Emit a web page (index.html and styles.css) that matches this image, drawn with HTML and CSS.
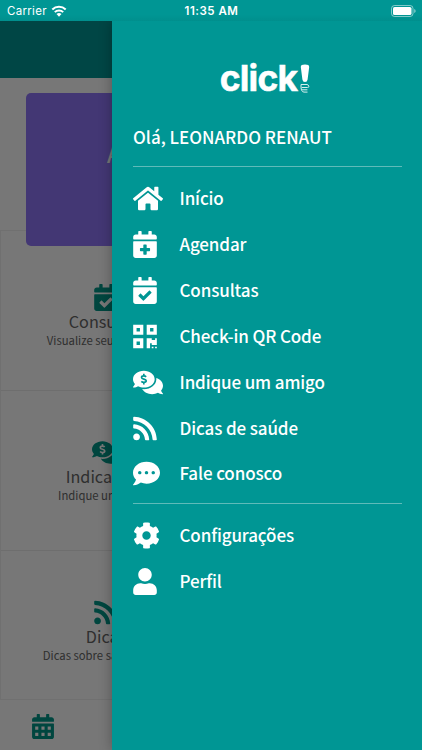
FILE: index.html
```html
<!DOCTYPE html>
<html lang="pt-BR">
<head>
  <meta charset="UTF-8">
  <meta name="viewport" content="width=device-width, initial-scale=1">
  <title>Click - Menu</title>
  <link rel="stylesheet" href="styles.css">
</head>
<body>

  <svg class="sprite" width="0" height="0">
    <symbol id="home" viewBox="0 0 576 512"><path d="M280.37 148.26L96 300.11V464a16 16 0 0 0 16 16l112.06-.29a16 16 0 0 0 15.92-16V368a16 16 0 0 1 16-16h64a16 16 0 0 1 16 16v95.64a16 16 0 0 0 16 16.05L464 480a16 16 0 0 0 16-16V300L295.67 148.26a12.19 12.19 0 0 0-15.3 0zM571.6 251.47L488 182.56V44.05a12 12 0 0 0-12-12h-56a12 12 0 0 0-12 12v72.61L318.47 43a48 48 0 0 0-61 0L4.34 251.47a12 12 0 0 0-1.6 16.9l25.5 31A12 12 0 0 0 45.15 301l235.22-193.74a12.19 12.19 0 0 1 15.3 0L530.9 301a12 12 0 0 0 16.9-1.6l25.5-31a12 12 0 0 0-1.7-16.93z"/></symbol>
    <symbol id="calendar-plus" viewBox="0 0 448 512"><path fill-rule="evenodd" d="M436 160H12c-6.627 0-12-5.373-12-12v-36c0-26.51 21.49-48 48-48h48V12c0-6.627 5.373-12 12-12h40c6.627 0 12 5.373 12 12v52h128V12c0-6.627 5.373-12 12-12h40c6.627 0 12 5.373 12 12v52h48c26.51 0 48 21.49 48 48v36c0 6.627-5.373 12-12 12zM12 192h424c6.627 0 12 5.373 12 12v260c0 26.51-21.49 48-48 48H48c-26.51 0-48-21.49-48-48V204c0-6.627 5.373-12 12-12zM204 256q-12 0-12 12v52h-52q-12 0-12 12v40q0 12 12 12h52v52q0 12 12 12h40q12 0 12-12v-52h52q12 0 12-12v-40q0-12-12-12h-52v-52q0-12-12-12z"/></symbol>
    <symbol id="calendar-check" viewBox="0 0 448 512"><path d="M436 160H12c-6.627 0-12-5.373-12-12v-36c0-26.51 21.49-48 48-48h48V12c0-6.627 5.373-12 12-12h40c6.627 0 12 5.373 12 12v52h128V12c0-6.627 5.373-12 12-12h40c6.627 0 12 5.373 12 12v52h48c26.51 0 48 21.49 48 48v36c0 6.627-5.373 12-12 12zM12 192h424c6.627 0 12 5.373 12 12v260c0 26.51-21.49 48-48 48H48c-26.51 0-48-21.49-48-48V204c0-6.627 5.373-12 12-12zm333.296 95.947l-28.169-28.398c-4.667-4.705-12.265-4.736-16.97-.068L194.12 364.665l-45.98-46.352c-4.667-4.705-12.265-4.736-16.97-.068l-28.397 28.17c-4.705 4.667-4.736 12.265-.068 16.97l82.601 83.269c4.667 4.705 12.265 4.736 16.97.068l142.953-141.805c4.705-4.667 4.736-12.265.068-16.97z"/></symbol>
    <symbol id="calendar" viewBox="0 0 448 512"><path fill-rule="evenodd" d="M436 160H12c-6.627 0-12-5.373-12-12v-36c0-26.51 21.49-48 48-48h48V12c0-6.627 5.373-12 12-12h40c6.627 0 12 5.373 12 12v52h128V12c0-6.627 5.373-12 12-12h40c6.627 0 12 5.373 12 12v52h48c26.51 0 48 21.49 48 48v36c0 6.627-5.373 12-12 12zM12 192h424c6.627 0 12 5.373 12 12v260c0 26.51-21.49 48-48 48H48c-26.51 0-48-21.49-48-48V204c0-6.627 5.373-12 12-12zM64 256h64v64H64zM192 256h64v64h-64zM320 256h64v64h-64zM64 384h64v64H64zM192 384h64v64h-64zM320 384h64v64h-64z"/></symbol>
    <symbol id="qrcode" viewBox="0 0 448 512"><path d="M0 224h192V32H0v192zM64 96h64v64H64V96zm192-64v192h192V32H256zm128 128h-64V96h64v64zM0 480h192V288H0v192zm64-128h64v64H64v-64zm352-64h32v128h-96v-32h-32v96h-64V288h96v32h64v-32zm0 160h32v32h-32v-32zm-64 0h32v32h-32v-32z"/></symbol>
    <symbol id="comments" viewBox="0 0 576 512"><path d="M416 192c0-88.4-93.1-160-208-160S0 103.6 0 192c0 34.3 14.1 65.9 38 92-13.4 30.2-35.5 54.2-35.8 54.5-2.2 2.3-2.8 5.7-1.5 8.7S4.8 352 8 352c36.6 0 66.9-12.3 88.7-25 32.2 15.7 70.3 25 111.3 25 114.9 0 208-71.6 208-160zm122 220c23.9-26 38-57.7 38-92 0-66.9-53.5-124.2-129.3-148.1.9 6.6 1.3 13.3 1.3 20.1 0 105.9-107.7 192-240 192-10.8 0-21.3-.8-31.7-1.9C207.8 439.6 281.8 480 368 480c41 0 79.1-9.2 111.3-25 21.8 12.7 52.1 25 88.7 25 3.2 0 6.1-1.9 7.3-4.8 1.3-2.9.7-6.3-1.5-8.7-.3-.3-22.4-24.2-35.8-54.5z"/><path class="coin" d="M208 88v40m0 128v40M252 148c-12-15-28-18-44-18-28 0-44 12-44 30 0 42 90 20 90 64 0 20-18 31-46 31-20 0-36-7-48-19"/></symbol>
    <symbol id="rss" viewBox="0 0 448 512"><path d="M128.081 415.959c0 35.369-28.672 64.041-64.041 64.041S0 451.328 0 415.959s28.672-64.041 64.041-64.041 64.04 28.673 64.04 64.041zm175.66 47.25c-8.354-154.6-132.185-278.587-286.95-286.95C7.656 175.765 0 183.105 0 192.253v48.069c0 8.415 6.49 15.472 14.887 16.018 111.832 7.284 201.473 96.702 208.772 208.772.547 8.397 7.604 14.887 16.018 14.887h48.069c9.149.001 16.489-7.655 15.995-16.79zm144.249.288C439.596 229.677 251.465 40.445 16.503 32.01 7.473 31.686 0 38.981 0 48.016v48.068c0 8.625 6.835 15.645 15.453 15.999 191.179 7.839 344.627 161.316 352.465 352.465.353 8.618 7.373 15.453 15.999 15.453h48.068c9.034-.001 16.329-7.474 16.005-16.504z"/></symbol>
    <symbol id="comment" viewBox="0 0 512 512"><path d="M256 32C114.6 32 0 125.1 0 240c0 49.6 21.4 95 57 130.7C44.5 421.1 2.7 466 2.2 466.5c-2.2 2.3-2.8 5.7-1.5 8.7S4.8 480 8 480c66.3 0 116-31.8 140.6-51.4 32.7 12.3 69 19.4 107.4 19.4 141.4 0 256-93.1 256-208S397.4 32 256 32zM128 272c-17.7 0-32-14.3-32-32s14.3-32 32-32 32 14.3 32 32-14.3 32-32 32zm128 0c-17.7 0-32-14.3-32-32s14.3-32 32-32 32 14.3 32 32-14.3 32-32 32zm128 0c-17.7 0-32-14.3-32-32s14.3-32 32-32 32 14.3 32 32-14.3 32-32 32z"/></symbol>
    <symbol id="cog" viewBox="0 0 512 512"><path d="M487.4 315.7l-42.6-24.6c4.3-23.2 4.3-47 0-70.2l42.6-24.6c4.9-2.8 7.1-8.6 5.5-14-11.1-35.6-30-67.8-54.7-94.6-3.8-4.1-10-5.1-14.8-2.3L380.8 110c-17.9-15.4-38.5-27.3-60.8-35.1V25.8c0-5.6-3.9-10.5-9.4-11.7-36.7-8.2-74.3-7.8-109.2 0-5.5 1.2-9.4 6.1-9.4 11.7V75c-22.2 7.9-42.8 19.8-60.8 35.1L88.7 85.5c-4.9-2.8-11-1.9-14.8 2.3-24.7 26.7-43.6 58.9-54.7 94.6-1.7 5.4.6 11.2 5.5 14L67.3 221c-4.3 23.2-4.3 47 0 70.2l-42.6 24.6c-4.9 2.8-7.1 8.6-5.5 14 11.1 35.6 30 67.8 54.7 94.6 3.8 4.1 10 5.1 14.8 2.3l42.6-24.6c17.9 15.4 38.5 27.3 60.8 35.1v49.2c0 5.6 3.9 10.5 9.4 11.7 36.7 8.2 74.3 7.8 109.2 0 5.5-1.2 9.4-6.1 9.4-11.7v-49.2c22.2-7.9 42.8-19.8 60.8-35.1l42.6 24.6c4.9 2.8 11 1.9 14.8-2.3 24.7-26.7 43.6-58.9 54.7-94.6 1.5-5.5-.7-11.3-5.6-14.1zM256 336c-44.1 0-80-35.9-80-80s35.9-80 80-80 80 35.9 80 80-35.9 80-80 80z"/></symbol>
    <symbol id="user" viewBox="0 0 448 512"><path d="M224 256c70.7 0 128-57.3 128-128S294.7 0 224 0 96 57.3 96 128s57.3 128 128 128zm89.6 32h-16.7c-22.2 10.2-46.9 16-72.9 16s-50.6-5.8-72.9-16h-16.7C60.2 288 0 348.2 0 422.4V464c0 26.5 21.5 48 48 48h352c26.5 0 48-21.5 48-48v-41.6c0-74.2-60.2-134.4-134.4-134.4z"/></symbol>
  </svg>

  <div class="page">
    <div class="page-header"></div>
    <div class="page-content">
      <div class="banner">Agende sua consulta</div>
      <div class="cards">
        <div class="card">
          <svg class="icon icon-448"><use href="#calendar-check"/></svg>
          <h2>Consultas</h2>
          <p>Visualize seus horários</p>
        </div>
        <div class="card">
          <svg class="icon icon-576"><use href="#comments"/></svg>
          <h2>Indicações</h2>
          <p>Indique um amigo</p>
        </div>
        <div class="card">
          <svg class="icon icon-448"><use href="#rss"/></svg>
          <h2>Dicas</h2>
          <p>Dicas sobre saúde geral.</p>
        </div>
      </div>
    </div>
    <div class="tabs">
      <svg class="icon tab-icon"><use href="#calendar"/></svg>
    </div>
  </div>

  <div class="backdrop"></div>

  <div class="statusbar">
    <div class="carrier">
      Carrier
      <svg class="wifi" viewBox="0 0 16 12">
        <path d="M1.3 4.5a9.6 9.6 0 0 1 13.4 0M3.8 7.1a6 6 0 0 1 8.4 0"/>
        <path class="wifi-dot" d="M8 11.7L5.5 9.1a3.6 3.6 0 0 1 5 0z"/>
      </svg>
    </div>
    <div class="time">11:35 AM</div>
    <svg class="battery" viewBox="0 0 25 12">
      <rect class="shell" x=".5" y=".5" width="21.5" height="11" rx="3"/>
      <rect x="2" y="2" width="18.5" height="8" rx="1.6"/>
      <path class="tip" d="M23.3 4q1.3.5 1.3 2t-1.3 2z"/>
    </svg>
  </div>

  <nav class="drawer">
    <div class="logo">
      <span>click</span>
      <svg class="mark" viewBox="0 0 10 30">
        <path d="M.8 3Q.8.6 5 .6T9.2 3L7.6 15.5Q7.3 18 5 18T2.4 15.5z"/>
        <path class="cup" d="M1.6 23.5h5.800q1.700 0 1.500-1.300T7 20.500H1q-.4 7.600 3 7.600h3.500M2 25.800h5.400"/>
      </svg>
    </div>
    <div class="hello">Olá, LEONARDO RENAUT</div>
    <ul class="menu">
      <li><svg class="icon icon-576"><use href="#home"/></svg><span>Início</span></li>
      <li><svg class="icon icon-448"><use href="#calendar-plus"/></svg><span>Agendar</span></li>
      <li><svg class="icon icon-448"><use href="#calendar-check"/></svg><span>Consultas</span></li>
      <li><svg class="icon icon-448"><use href="#qrcode"/></svg><span>Check-in QR Code</span></li>
      <li><svg class="icon icon-576"><use href="#comments"/></svg><span>Indique um amigo</span></li>
      <li><svg class="icon icon-448"><use href="#rss"/></svg><span>Dicas de saúde</span></li>
      <li><svg class="icon"><use href="#comment"/></svg><span>Fale conosco</span></li>
    </ul>
    <ul class="menu menu-bottom">
      <li><svg class="icon"><use href="#cog"/></svg><span>Configurações</span></li>
      <li><svg class="icon icon-448"><use href="#user"/></svg><span>Perfil</span></li>
    </ul>
  </nav>

</body>
</html>
```

FILE: styles.css
```css
* {
  box-sizing: border-box;
}

body {
  margin: 0;
  height: 750px;
  position: relative;
  overflow: hidden;
  font-family: "Noto Sans CJK JP", "Noto Sans", sans-serif;
  background: #fff;
}

.sprite {
  position: absolute;
}

.icon {
  width: 27px;
  height: 27px;
  fill: currentColor;
  flex-shrink: 0;
}

.icon-448 {
  width: 24px;
}

.icon-576 {
  width: 30px;
}

.coin {
  fill: none;
  stroke: var(--coin);
  stroke-width: 32;
}

/* home page */
.page {
  --coin: #fff;
  height: 750px;
  padding-top: 21px;
  display: flex;
  flex-direction: column;
}

.page-header {
  height: 57px;
  flex-shrink: 0;
  background: #009694;
}

.page-content {
  flex: 1;
  padding-top: 15px;
}

.banner {
  position: relative;
  z-index: 1;
  height: 153px;
  margin: 0 26px;
  padding-top: 44px;
  border-radius: 5px;
  background: #8f76f8;
  color: #fff;
  font-size: 21.3px;
  line-height: 34px;
  font-weight: 500;
  text-align: center;
}

.cards {
  width: 212px;
  margin-top: -16px;
  border: 1px solid #f0f0f0;
}

.card {
  height: 160px;
  padding-top: 53px;
  display: flex;
  flex-direction: column;
  align-items: center;
  border-bottom: 1px solid #ebebeb;
  color: #009688;
}

.card:last-child {
  height: 148px;
  padding-top: 48px;
  border-bottom: none;
}

.card:nth-child(2) {
  padding-top: 48px;
}

.card .icon-576 {
  width: 29px;
}

.card h2,
.card p {
  margin: 0;
  color: #666;
  font-weight: 400;
  white-space: nowrap;
}

.card h2 {
  font-size: 16.2px;
  line-height: 21px;
}

.card p {
  font-size: 11.3px;
  line-height: 17px;
}

.tabs {
  height: 50px;
  padding: 14px 32px;
  color: #009688;
}

.tab-icon {
  width: 22px;
  height: 25px;
}

.backdrop {
  position: absolute;
  inset: 0;
  z-index: 2;
  background: rgba(0, 0, 0, 0.533);
}

/* status bar */
.statusbar {
  position: absolute;
  top: 0;
  left: 0;
  right: 0;
  z-index: 4;
  height: 21px;
  padding: 0 6px 0 7px;
  display: grid;
  grid-template-columns: 1fr auto 1fr;
  align-items: center;
  background: linear-gradient(#009694, #009694 70%, #008f8d);
  color: #fff;
  font-family: Inter, sans-serif;
  font-size: 11.5px;
  letter-spacing: 0.3px;
}

.carrier {
  display: flex;
  align-items: center;
  gap: 4px;
}

.wifi {
  width: 16px;
  height: 12px;
  fill: none;
  stroke: #fff;
  stroke-width: 2;
}

.wifi-dot {
  fill: #fff;
  stroke: none;
}

.time {
  font-weight: 600;
  letter-spacing: 0.5px;
}

.battery {
  width: 25px;
  height: 12px;
  justify-self: end;
  fill: #fff;
}

.shell {
  fill: none;
  stroke: rgba(255, 255, 255, 0.5);
}

.tip {
  fill: rgba(255, 255, 255, 0.6);
}

/* side menu */
.drawer {
  --coin: #009694;
  position: absolute;
  top: 21px;
  right: 0;
  bottom: 0;
  z-index: 3;
  width: 310px;
  padding: 40px 20px 0 21px;
  background: #009694;
  box-shadow: 0 0 12px rgba(0, 0, 0, 0.3);
  color: #fff;
}

.logo {
  height: 39px;
  padding-right: 5px;
  display: flex;
  justify-content: center;
  gap: 3px;
  font-family: Inter, sans-serif;
  font-size: 35.5px;
  line-height: 36px;
  font-weight: 700;
  letter-spacing: -0.8px;
}

.logo span {
  -webkit-text-stroke: 0.5px #fff;
}

.mark {
  width: 10px;
  height: 30px;
  margin-top: 3px;
  fill: #fff;
}

.cup {
  fill: none;
  stroke: #d5efee;
  stroke-width: 1;
}

.hello {
  height: 67px;
  padding-top: 23px;
  border-bottom: 1px solid #5fbbb9;
  font-size: 17px;
  line-height: 27px;
  font-weight: 500;
}

.menu {
  list-style: none;
  margin: 0;
  padding: 9px 0 0 0;
  height: 337px;
  border-bottom: 1px solid #5fbbb9;
}

.menu li {
  height: 45.85px;
  display: grid;
  grid-template-columns: 46.5px 1fr;
  align-items: center;
  font-size: 17px;
  line-height: 26px;
  font-weight: 500;
  letter-spacing: -0.12px;
}

.menu span {
  padding-bottom: 1px;
}

.menu-bottom {
  height: auto;
  border-bottom: none;
}
```
